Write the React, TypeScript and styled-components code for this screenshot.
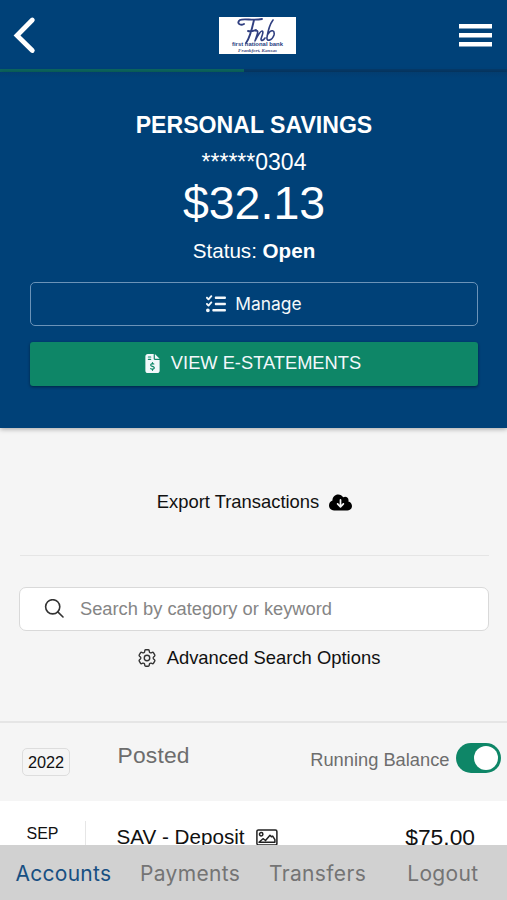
import React from "react";
import styled, { createGlobalStyle } from "styled-components";
import { FaListCheck, FaFileInvoiceDollar, FaCloudArrowDown } from "react-icons/fa6";
import { HiOutlineCog6Tooth } from "react-icons/hi2";

const BLUE = "#004178";
const GREEN = "#0e8667";

const GlobalStyle = createGlobalStyle`
  *, *::before, *::after { box-sizing: border-box; }
  body { margin: 0; background: #f5f5f5; }
  button, input { font: inherit; letter-spacing: inherit; }
`;

const Screen = styled.div`
  width: 507px;
  height: 900px;
  display: flex;
  flex-direction: column;
  overflow: hidden;
  background: #f5f5f5;
  color: #111;
  font-family: "Liberation Sans", Arial, sans-serif;
  font-size: 18.4px;
`;

const TopBar = styled.header`
  flex: none;
  height: 69px;
  padding: 0 15px 0 13px;
  display: grid;
  grid-template-columns: 205px 78px 1fr;
  align-items: center;
  background: ${BLUE};
`;

const IconButton = styled.button<{ $end?: boolean }>`
  justify-self: ${(p) => (p.$end ? "end" : "start")};
  margin-top: ${(p) => (p.$end ? 2 : 0)}px;
  display: flex;
  padding: 0;
  border: 0;
  background: none;
  color: #fff;
`;

const Logo = styled.svg`
  display: block;
  width: 77px;
  height: 37px;
  margin: 1px 0 0 1px;
`;

const Progress = styled.div`
  flex: none;
  height: 3px;
  background: #063a69;
`;

const ProgressFill = styled.div`
  width: 244px;
  height: 100%;
  background: #0c665f;
`;

const Hero = styled.section`
  flex: none;
  height: 356px;
  padding: 38px 29px 0 30px;
  display: flex;
  flex-direction: column;
  align-items: center;
  background: linear-gradient(#033d70, ${BLUE} 6px);
  box-shadow: 0 1px 5px rgba(0, 0, 0, 0.35);
  color: #fff;
`;

const AccountName = styled.h1`
  margin: 0;
  font-size: 23.1px;
  line-height: 30px;
`;

const AccountNumber = styled.div`
  margin-top: 7px;
  font-size: 23px;
  line-height: 30px;
`;

const Amount = styled.div`
  font-size: 46.5px;
  line-height: 52px;
`;

const Status = styled.div`
  margin-top: 9px;
  font-size: 20.6px;
  line-height: 26px;
`;

const HeroButton = styled.button<{ $solid?: boolean }>`
  width: 100%;
  height: 44px;
  margin-top: ${(p) => (p.$solid ? 15.5 : 18)}px;
  padding: 0 0 1px;
  display: flex;
  align-items: center;
  justify-content: center;
  gap: 9px;
  border: ${(p) => (p.$solid ? "0" : "1.5px solid #6b93b8")};
  border-radius: ${(p) => (p.$solid ? 3 : 5)}px;
  background: ${(p) => (p.$solid ? GREEN : "transparent")};
  box-shadow: ${(p) => (p.$solid ? "0 1px 3px rgba(0,0,0,.45)" : "none")};
  color: #f3f8fb;
  font-family: ${(p) => (p.$solid ? "inherit" : 'Inter, "Liberation Sans", sans-serif')};
  font-size: ${(p) => (p.$solid ? 18.3 : 17.4)}px;
`;

const ExportArea = styled.div`
  flex: none;
  height: 128px;
  margin: 0 18px 0 20px;
  padding-top: 62px;
  border-bottom: 1px solid #e5e5e5;
`;

const LinkRow = styled.div<{ $gap: number; $nudge?: number }>`
  display: flex;
  align-items: center;
  justify-content: center;
  gap: ${(p) => p.$gap}px;
  padding-left: ${(p) => p.$nudge ?? 0}px;
  line-height: 24px;
`;

const SearchArea = styled.div`
  flex: none;
  height: 167px;
  padding: 31px 18px 0 19px;
  display: flex;
  flex-direction: column;
  gap: 15px;
  border-bottom: 2px solid #e5e5e5;
`;

const SearchField = styled.label`
  height: 44px;
  padding: 0 24px;
  display: flex;
  align-items: center;
  gap: 16px;
  border: 1.5px solid #d9d9d9;
  border-radius: 7px;
  background: #fff;
  color: #333;
`;

const SearchInput = styled.input`
  flex: 1;
  padding: 0;
  border: 0;
  outline: 0;
  background: none;
  font-size: 18.3px;
  &::placeholder { color: #858585; opacity: 1; }
`;

const ListHeader = styled.div`
  flex: none;
  height: 78px;
  padding: 0 6px 0 22px;
  display: flex;
  align-items: flex-start;
`;

const Year = styled.div`
  width: 48px;
  height: 28px;
  margin-top: 25px;
  border: 1.5px solid #ddd;
  border-radius: 5px;
  font-size: 16.3px;
  line-height: 27px;
  text-align: center;
`;

const Posted = styled.div`
  margin: 18px 0 0 47.5px;
  color: #6d6d6d;
  font-size: 22.8px;
  line-height: 28px;
  letter-spacing: 0.2px;
`;

const RunningBalance = styled.div`
  margin: 20px 0 0 auto;
  display: flex;
  align-items: center;
  gap: 6.5px;
  color: #6d6d6d;
  font-size: 18.3px;
`;

const BalanceLabel = styled.span`
  padding-top: 4px;
`;

const Toggle = styled.span`
  width: 45px;
  height: 30px;
  padding: 3px;
  display: flex;
  justify-content: flex-end;
  border-radius: 15px;
  background: ${GREEN};
`;

const Knob = styled.span`
  width: 24px;
  height: 24px;
  border-radius: 50%;
  background: #fff;
`;

const Transaction = styled.div`
  flex: none;
  height: 44px;
  padding: 20px 32px 0 0;
  display: flex;
  align-items: flex-start;
  overflow: hidden;
  background: #fff;
`;

const Month = styled.div`
  width: 86px;
  height: 34px;
  padding-top: 3px;
  border-right: 1px solid #e6e6e6;
  font-size: 16px;
  line-height: 20px;
  text-align: center;
`;

const Description = styled.div`
  margin-left: 30.5px;
  padding-top: 1px;
  display: flex;
  align-items: center;
  gap: 11px;
  font-size: 20.65px;
  line-height: 30px;
`;

const TransactionAmount = styled.div`
  margin-left: auto;
  font-size: 22.8px;
  line-height: 33px;
`;

const TabBar = styled.nav`
  flex: none;
  height: 55px;
  padding: 2px 28.5px 0 15.5px;
  display: flex;
  align-items: center;
  gap: 28.7px;
  background: #d1d1d1;
  font-family: Inter, "Liberation Sans", sans-serif;
  font-size: 21px;
`;

const Tab = styled.a<{ $active?: boolean }>`
  color: ${(p) => (p.$active ? "#174f82" : "#747474")};
  letter-spacing: ${(p) => (p.$active ? 0.27 : 0.35)}px;
  &:last-child { margin-left: auto; }
`;

const StatementsLabel = styled.span`
  padding-right: 4px;
`;

export default function App() {
  return (
    <>
      <GlobalStyle />
      <Screen>
        <TopBar>
          <IconButton aria-label="Back">
            <svg width="23" height="38" viewBox="0 0 23 38" fill="none" stroke="currentColor" strokeWidth="4.8">
              <path d="M19.3 4 4 19.5l15.3 15" strokeLinejoin="miter" strokeLinecap="round" />
            </svg>
          </IconButton>
          <Logo viewBox="0 0 77 37" aria-label="First National Bank">
            <rect width="77" height="37" fill="#fff" />
            <g fill="none" stroke="#303f80" strokeLinecap="round" strokeLinejoin="round">
              <path strokeWidth="1.9" d="M25 7c-4 2-8-1-4-4 4-2 13 1 22-1M35 3C33 12 31 21 27 26M29 14c3 1 5 0 8-1" />
              <path strokeWidth="1.6" d="M37 14c2-1 2 1 1 4l-2 6c3-6 5-10 7-10s0 5-1 8c0 2 2 2 4-1M54 3c-3 4-5 11-6 17-1 5 5 4 7-2 1-5-3-6-6-1" />
            </g>
            <text x="13" y="29.2" textLength="51" lengthAdjust="spacingAndGlyphs" fontFamily="Liberation Sans, sans-serif" fontWeight="700" fontSize="5.8" fill="#293d80">first national bank</text>
            <text x="19" y="34.8" textLength="39" lengthAdjust="spacingAndGlyphs" fontFamily="Liberation Serif, serif" fontStyle="italic" fontWeight="700" fontSize="5" fill="#485285">Frankfort, Kansas</text>
          </Logo>
          <IconButton $end aria-label="Menu">
            <svg width="33" height="23" viewBox="0 0 33 23" fill="currentColor">
              <path d="M0 0h33v4.4H0zM0 9h33v4.4H0zM0 18h33v4.4H0z" />
            </svg>
          </IconButton>
        </TopBar>
        <Progress><ProgressFill /></Progress>

        <Hero>
          <AccountName>PERSONAL SAVINGS</AccountName>
          <AccountNumber>******0304</AccountNumber>
          <Amount>$32.13</Amount>
          <Status>Status: <b>Open</b></Status>
          <HeroButton>
            <FaListCheck size={20} />
            Manage
          </HeroButton>
          <HeroButton $solid>
            <FaFileInvoiceDollar size={19} />
            <StatementsLabel>VIEW E-STATEMENTS</StatementsLabel>
          </HeroButton>
        </Hero>

        <ExportArea>
          <LinkRow $gap={10}>
            Export Transactions
            <FaCloudArrowDown size={23} color="#000" />
          </LinkRow>
        </ExportArea>

        <SearchArea>
          <SearchField>
            <svg width="20" height="20" viewBox="0 0 20 20" fill="none" stroke="currentColor" strokeWidth="1.6" strokeLinecap="round">
              <circle cx="8.7" cy="7.8" r="7.1" />
              <path d="m13.8 12.9 5.2 5.1" />
            </svg>
            <SearchInput placeholder="Search by category or keyword" />
          </SearchField>
          <LinkRow $gap={9} $nudge={8}>
            <HiOutlineCog6Tooth size={22} color="#333" />
            Advanced Search Options
          </LinkRow>
        </SearchArea>

        <ListHeader>
          <Year>2022</Year>
          <Posted>Posted</Posted>
          <RunningBalance>
            <BalanceLabel>Running Balance</BalanceLabel>
            <Toggle><Knob /></Toggle>
          </RunningBalance>
        </ListHeader>

        <Transaction>
          <Month>SEP</Month>
          <Description>
            SAV - Deposit
            <svg width="22" height="17" viewBox="0 0 22 17" fill="none" stroke="#222" strokeWidth="1.5" strokeLinejoin="round">
              <rect x=".9" y=".9" width="20" height="15" rx="1.5" />
              <circle cx="5.2" cy="5.2" r="1.7" />
              <path d="M3 13.2 7 9.7l2.5 1.8 4.5-5.3 1.4 1.5 1.3-.6 2.2 3.6v2.5Z" />
            </svg>
          </Description>
          <TransactionAmount>$75.00</TransactionAmount>
        </Transaction>

        <TabBar>
          <Tab $active>Accounts</Tab>
          <Tab>Payments</Tab>
          <Tab>Transfers</Tab>
          <Tab>Logout</Tab>
        </TabBar>
      </Screen>
    </>
  );
}
